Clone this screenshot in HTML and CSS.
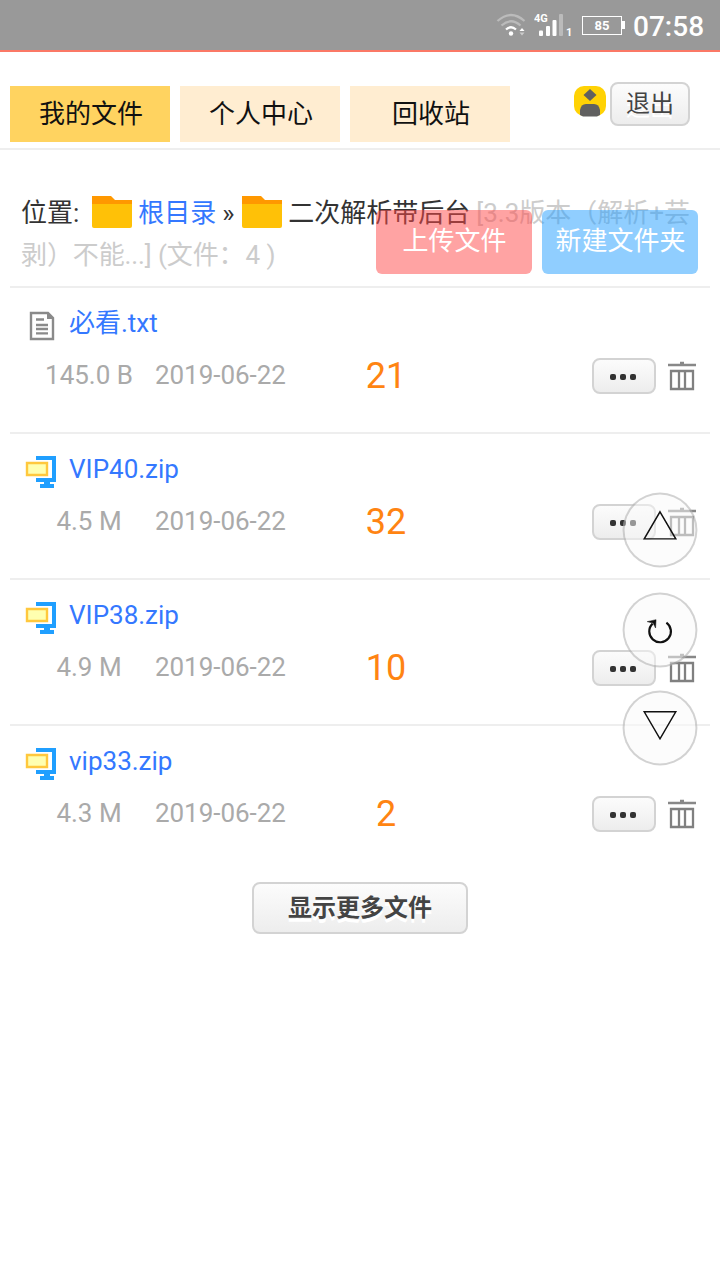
FILE: index.html
```html
<!DOCTYPE html>
<html lang="zh-CN">
<head>
    <meta charset="UTF-8">
    <title>我的文件</title>
    <link rel="stylesheet" href="styles.css">
</head>
<body>
    <svg width="0" height="0" class="defs">
        <symbol id="folder" viewBox="0 0 40 32">
            <path d="M0 0H19L23 4H40V12H0Z" fill="#ff9800"/>
            <path d="M0 8H40V30Q40 32 38 32H2Q0 32 0 30Z" fill="#ffc107"/>
        </symbol>
        <symbol id="txt" viewBox="0 0 32 32">
            <path d="M6 3H23L28 8V29H6Z" fill="#fff" stroke="#8a8a8a" stroke-width="2.4"/>
            <path d="M22 2V9H29Z" fill="#8a8a8a"/>
            <path d="M11 9.500H19M11 15H23M11 19H23M11 23.400H23" stroke="#8a8a8a" stroke-width="2.4"/>
        </symbol>
        <symbol id="zip" viewBox="0 0 32 34">
            <path d="M11 1H31V27H25V29H29V33H15V29H19V27H11V23H27V5H11Z" fill="#209fff"/>
            <path d="M2 8H22V20H2Z" fill="#ffffb0" stroke="#ffc83d" stroke-width="2.4"/>
        </symbol>
        <symbol id="trash" viewBox="0 0 28 30">
            <path d="M0 4H28M12 2H16" stroke="#888" stroke-width="2.4"/>
            <path d="M3 10H25V28H3ZM11 10V28M17 10V28" fill="none" stroke="#808080" stroke-width="2.3"/>
        </symbol>
    </svg>
    <div class="status">
        <svg class="wifi" width="30" height="24" viewBox="0 0 30 24">
            <g fill="none" stroke-width="2.2">
                <path d="M1.500 8Q15-4 28.500 8" stroke="#bbb"/>
                <path d="M5.500 12.500Q15 4 24.500 12.500" stroke="#bbb"/>
                <path d="M10 16.500Q15 12 20 16.500" stroke="#fff"/>
            </g>
            <circle cx="15" cy="20.500" r="2.200" fill="#fff"/>
            <path d="M23.500 18L26 15L28.500 18Z" fill="#fff"/>
            <path d="M23.500 19.500L26 22.500L28.500 19.500Z" fill="#ccc"/>
        </svg>
        <svg class="signal" width="40" height="26" viewBox="0 0 40 26">
            <g fill="#fff">
                <rect x="5" y="18.500" width="4" height="5.500" rx="1"/>
                <rect x="12" y="14" width="4" height="10" rx="1"/>
                <rect x="18.500" y="8" width="4" height="16" rx="1"/>
                <rect x="25" y="2" width="4" height="22" rx="1" fill="#bbb"/>
                <text x="0" y="10" font-size="11">4G</text>
                <text x="32" y="24" font-size="11">1</text>
            </g>
        </svg>
        <div class="battery">85</div>
        <div class="time">07:58</div>
    </div>
    <div class="nav">
        <a class="tab on">我的文件</a>
        <a class="tab">个人中心</a>
        <a class="tab">回收站</a>
        <div class="user">
            <svg width="32" height="32" viewBox="0 0 32 32">
                <rect y="1" width="32" height="30" rx="10" fill="#ffd204"/>
                <path d="M16 4L22.500 10L16 16L9.500 10Z" fill="#606060"/>
                <path d="M6 30V25Q7 19 12 19H20Q25 19 26 25V30L23 31.500H9Z" fill="#606060"/>
            </svg>
            <button class="btn quit">退出</button>
        </div>
    </div>
    <div class="main">
        <div class="path">
            <span>位置:</span>
            <svg class="folder f1"><use href="#folder"/></svg>
            <a>根目录</a>
            <span class="sep">»</span>
            <svg class="folder f2"><use href="#folder"/></svg>
            <span>二次解析带后台</span>
            <span class="desc d1">[3.3版本（解析+芸</span>
            <div class="desc d2">剥）不能...] (文件：<span class="num">4</span> )</div>
            <div class="ops">
                <a class="op up">上传文件</a>
                <a class="op new">新建文件夹</a>
            </div>
        </div>
        <div class="item">
            <div class="name"><svg class="ico"><use href="#txt"/></svg><a>必看.txt</a></div>
            <div class="info">
                <span class="size">145.0 B</span><span class="date">2019-06-22</span><span class="count">21</span>
                <button class="btn more"><i></i><i></i><i></i></button>
                <svg class="trash"><use href="#trash"/></svg>
            </div>
        </div>
        <div class="item">
            <div class="name"><svg class="ico zip"><use href="#zip"/></svg><a>VIP40.zip</a></div>
            <div class="info">
                <span class="size">4.5 M</span><span class="date">2019-06-22</span><span class="count">32</span>
                <button class="btn more"><i></i><i></i><i></i></button>
                <svg class="trash"><use href="#trash"/></svg>
            </div>
        </div>
        <div class="item">
            <div class="name"><svg class="ico zip"><use href="#zip"/></svg><a>VIP38.zip</a></div>
            <div class="info">
                <span class="size">4.9 M</span><span class="date">2019-06-22</span><span class="count">10</span>
                <button class="btn more"><i></i><i></i><i></i></button>
                <svg class="trash"><use href="#trash"/></svg>
            </div>
        </div>
        <div class="item">
            <div class="name"><svg class="ico zip"><use href="#zip"/></svg><a>vip33.zip</a></div>
            <div class="info">
                <span class="size">4.3 M</span><span class="date">2019-06-22</span><span class="count">2</span>
                <button class="btn more"><i></i><i></i><i></i></button>
                <svg class="trash"><use href="#trash"/></svg>
            </div>
        </div>
        <button class="btn load">显示更多文件</button>
    </div>
    <div class="float">
        <a class="round">
            <svg width="72" height="72" viewBox="0 0 72 72"><path d="M35 16.500L51 44H19Z"/></svg>
        </a>
        <a class="round reload">
            <svg width="72" height="72" viewBox="0 0 72 72">
                <path class="arc" d="M41.500 27.500A11 11 0 1 1 27.500 28.500"/>
                <path class="head" d="M22 26.500L31 24.500L30.500 33L28 28Z"/>
            </svg>
        </a>
        <a class="round">
            <svg width="72" height="72" viewBox="0 0 72 72"><path d="M19 18.500H51L35 46Z"/></svg>
        </a>
    </div>
</body>
</html>
```
FILE: styles.css
```css
*{
    margin:0;
    padding:0;
    box-sizing:border-box;
}
body{
    font-family:Roboto,"Noto Sans CJK SC",sans-serif;
    font-size:26px;
    color:#333;
    background-color:#fff;
}
svg{
    display:block;
    flex:none;
}
.defs{
    position:absolute;
}
/* 状态栏 */
.status{
    display:flex;
    height:52px;
    padding-right:16px;
    justify-content:flex-end;
    align-items:center;
    background-color:#999;
    border-bottom:2px solid #fb7866;
    color:#fff;
}
.wifi{
    margin-right:8px;
}
.signal{
    margin-right:8px;
    font-weight:bold;
}
.battery{
    position:relative;
    width:40px;
    height:19px;
    margin-right:11px;
    border:1.5px solid #fff;
    font-size:13px;
    line-height:18px;
    font-weight:bold;
    text-align:center;
}
.battery:after{
    content:"";
    position:absolute;
    right:-4px;
    top:4px;
    width:3px;
    height:8px;
    background-color:#fff;
}
.time{
    width:71px;
    padding-top:3px;
    font-size:28px;
    font-weight:500;
    line-height:50px;
    white-space:nowrap;
}
/* 导航 */
.nav{
    display:flex;
    height:98px;
    padding:34px 30px 0 10px;
    gap:10px;
    border-bottom:2px solid #eee;
}
.tab{
    width:160px;
    height:56px;
    padding-left:2px;
    line-height:56px;
    text-align:center;
    color:#111;
    background-color:#ffedd1;
}
.tab.on{
    background-color:#ffd360;
}
.user{
    display:flex;
    margin:-4px 0 0 auto;
    gap:4px;
}
.user svg{
    margin-top:3px;
}
.btn{
    border:2px solid #d3d3d3;
    border-radius:8px;
    background:linear-gradient(#fcfcfc,#ededed);
    font-family:inherit;
    color:#444;
    text-shadow:0 4px 0 #fff;
}
.quit{
    width:80px;
    height:44px;
    font-size:24px;
    line-height:38px;
}
/* 文件列表 */
.main{
    padding:0 10px;
}
.path{
    position:relative;
    display:flex;
    flex-wrap:wrap;
    height:136px;
    padding:42px 0 0 11px;
    line-height:42px;
    align-content:flex-start;
    white-space:nowrap;
}
.folder{
    width:40px;
    height:32px;
    margin-top:4px;
}
.f1{
    margin:4px 6px 0 13px;
}
.f2{
    margin-right:6px;
}
.sep{
    width:26px;
    padding-right:2px;
    text-align:center;
}
.desc{
    color:#ccc;
}
.d1{
    margin-left:6px;
}
.d2{
    width:100%;
    letter-spacing:-.1px;
}
.num{
    margin-left:1px;
}
a{
    color:#3478ff;
}
.ops{
    position:absolute;
    top:60px;
    right:12px;
    display:flex;
    gap:10px;
}
.op{
    width:156px;
    height:64px;
    padding-left:1px;
    line-height:63px;
    text-align:center;
    color:#fff;
    border-radius:6px;
}
.up{
    background-color:rgba(255,72,72,.5);
}
.new{
    background-color:rgba(34,158,255,.5);
}
.item{
    height:146px;
    padding-top:14px;
    border-top:2px solid #eee;
}
.name{
    display:flex;
    height:42px;
    line-height:42px;
    padding-left:15px;
}
.ico{
    width:32px;
    height:32px;
    margin:8px 12px 0 0;
}
.zip{
    height:34px;
    margin-top:7px;
}
.info{
    display:flex;
    height:62px;
    padding-right:14px;
    align-items:center;
    color:#aaa;
}
.size{
    width:134px;
    padding-left:24px;
    text-align:center;
}
.date{
    width:152px;
    padding-left:11px;
    letter-spacing:-.05px;
}
.count{
    width:176px;
    padding:2px 0 0 4px;
    text-align:center;
    font-size:36px;
    color:#ff8412;
}
.more{
    display:flex;
    width:64px;
    height:36px;
    margin:2px 12px 0 auto;
    padding:2px 2px 0 0;
    justify-content:center;
    align-items:center;
    gap:4px;
}
.more i{
    width:6px;
    height:6px;
    border-radius:2px;
    background-color:#333;
}
.trash{
    width:28px;
    height:30px;
    margin-top:2px;
}
.load{
    display:block;
    width:216px;
    height:52px;
    margin:12px auto 0;
    font-size:24px;
    font-weight:bold;
    line-height:46px;
}
/* 悬浮按钮 */
.float{
    position:fixed;
    top:492px;
    right:22px;
}
.round{
    display:block;
    width:76px;
    height:76px;
    padding:1px;
    border:2px solid rgba(0,0,0,.17);
    border-radius:50%;
    background-color:rgba(250,250,250,.5);
    transform:scale(.985);
}
.reload{
    margin:24px 0 22px;
}
.round path{
    fill:none;
    stroke:#111;
    stroke-width:1.5;
}
.round .arc{
    stroke-width:2.2;
}
.round .head{
    fill:#111;
    stroke-width:.5;
}
```
